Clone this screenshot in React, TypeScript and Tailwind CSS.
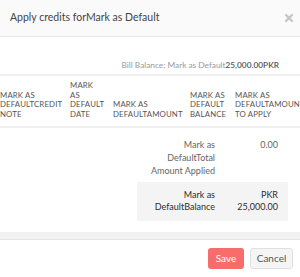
const headers = [
  { lines: ["MARK AS", "DEFAULTCREDIT", "NOTE"], width: "w-[70px]" },
  { lines: ["MARK", "AS", "DEFAULT", "DATE"], width: "w-[43px]" },
  { lines: ["MARK AS", "DEFAULTAMOUNT"], width: "w-[77px]" },
  { lines: ["MARK AS", "DEFAULT", "BALANCE"], width: "w-[45px]" },
  { lines: ["MARK AS", "DEFAULTAMOUNT", "TO APPLY"], width: "w-[80px]" },
];

function CloseIcon() {
  return (
    <svg width="8" height="8" viewBox="0 0 8 8" className="text-[#c4c4c4]">
      <path d="M1 1 L7 7 M7 1 L1 7" stroke="currentColor" strokeWidth="2.2" strokeLinecap="square" />
    </svg>
  );
}

export default function App() {
  return (
    <div className="w-[300px] h-[277px] overflow-hidden bg-white font-['Lato',sans-serif] flex flex-col">
      <div className="h-[37px] shrink-0 bg-[#fafafa] border-b border-[#e6e6e6] flex items-center justify-between pl-[10px] pr-[7px]">
        <span className="text-[10.5px] text-[#444]">Apply credits forMark as Default</span>
        <CloseIcon />
      </div>

      <div className="flex-1 flex flex-col overflow-hidden">
        <div className="pt-[22px] pb-[3px] pr-[21px] flex justify-end items-baseline text-[8.3px] leading-[12px]">
          <span className="text-[#9a9a9a]">Bill Balance: Mark as Default</span>
          <span className="font-semibold text-[#555]">25,000.00PKR</span>
        </div>

        <div className="flex border-y-2 border-[#f0f0f0] w-[330px] shrink-0">
          {headers.map((h, i) => (
            <div
              key={i}
              className={`${h.width} shrink-0 flex flex-col justify-end pt-[5px] pb-[6px] text-[7.8px] leading-[9.7px] tracking-[0.02em] text-[#555] whitespace-nowrap`}
            >
              {h.lines.map((l) => (
                <span key={l}>{l}</span>
              ))}
            </div>
          ))}
        </div>

        <div className="pt-[10px] pl-[137px] pr-[12px] text-[9px] text-[#666]">
          <div className="flex leading-[13px]">
            <div className="w-[78px] text-right">
              Mark as
              <br />
              DefaultTotal
              <br />
              Amount Applied
            </div>
            <div className="flex-1 text-right pr-[10px]">0.00</div>
          </div>
          <div className="mt-[5px] bg-[#f4f4f4] flex leading-[12.5px] pt-[7px] pb-[7px] text-[#2e2e2e]">
            <div className="w-[78px] text-right">
              Mark as
              <br />
              DefaultBalance
            </div>
            <div className="flex-1 text-right pr-[10px]">
              PKR
              <br />
              25,000.00
            </div>
          </div>
        </div>

        <div className="mt-auto h-[7px] bg-[#f2f2f2] shrink-0" />
      </div>

      <div className="h-[38px] shrink-0 border-t border-[#e6e6e6] flex justify-end items-start pt-[8px] pr-[7px] gap-[6px] text-[10px]">
        <button className="h-[21px] w-[36px] rounded-[3px] bg-[#f86c6b] text-white">Save</button>
        <button className="h-[21px] w-[43px] rounded-[3px] bg-[#f5f5f5] border border-[#e0e0e0] text-[#555]">
          Cancel
        </button>
      </div>
    </div>
  );
}
